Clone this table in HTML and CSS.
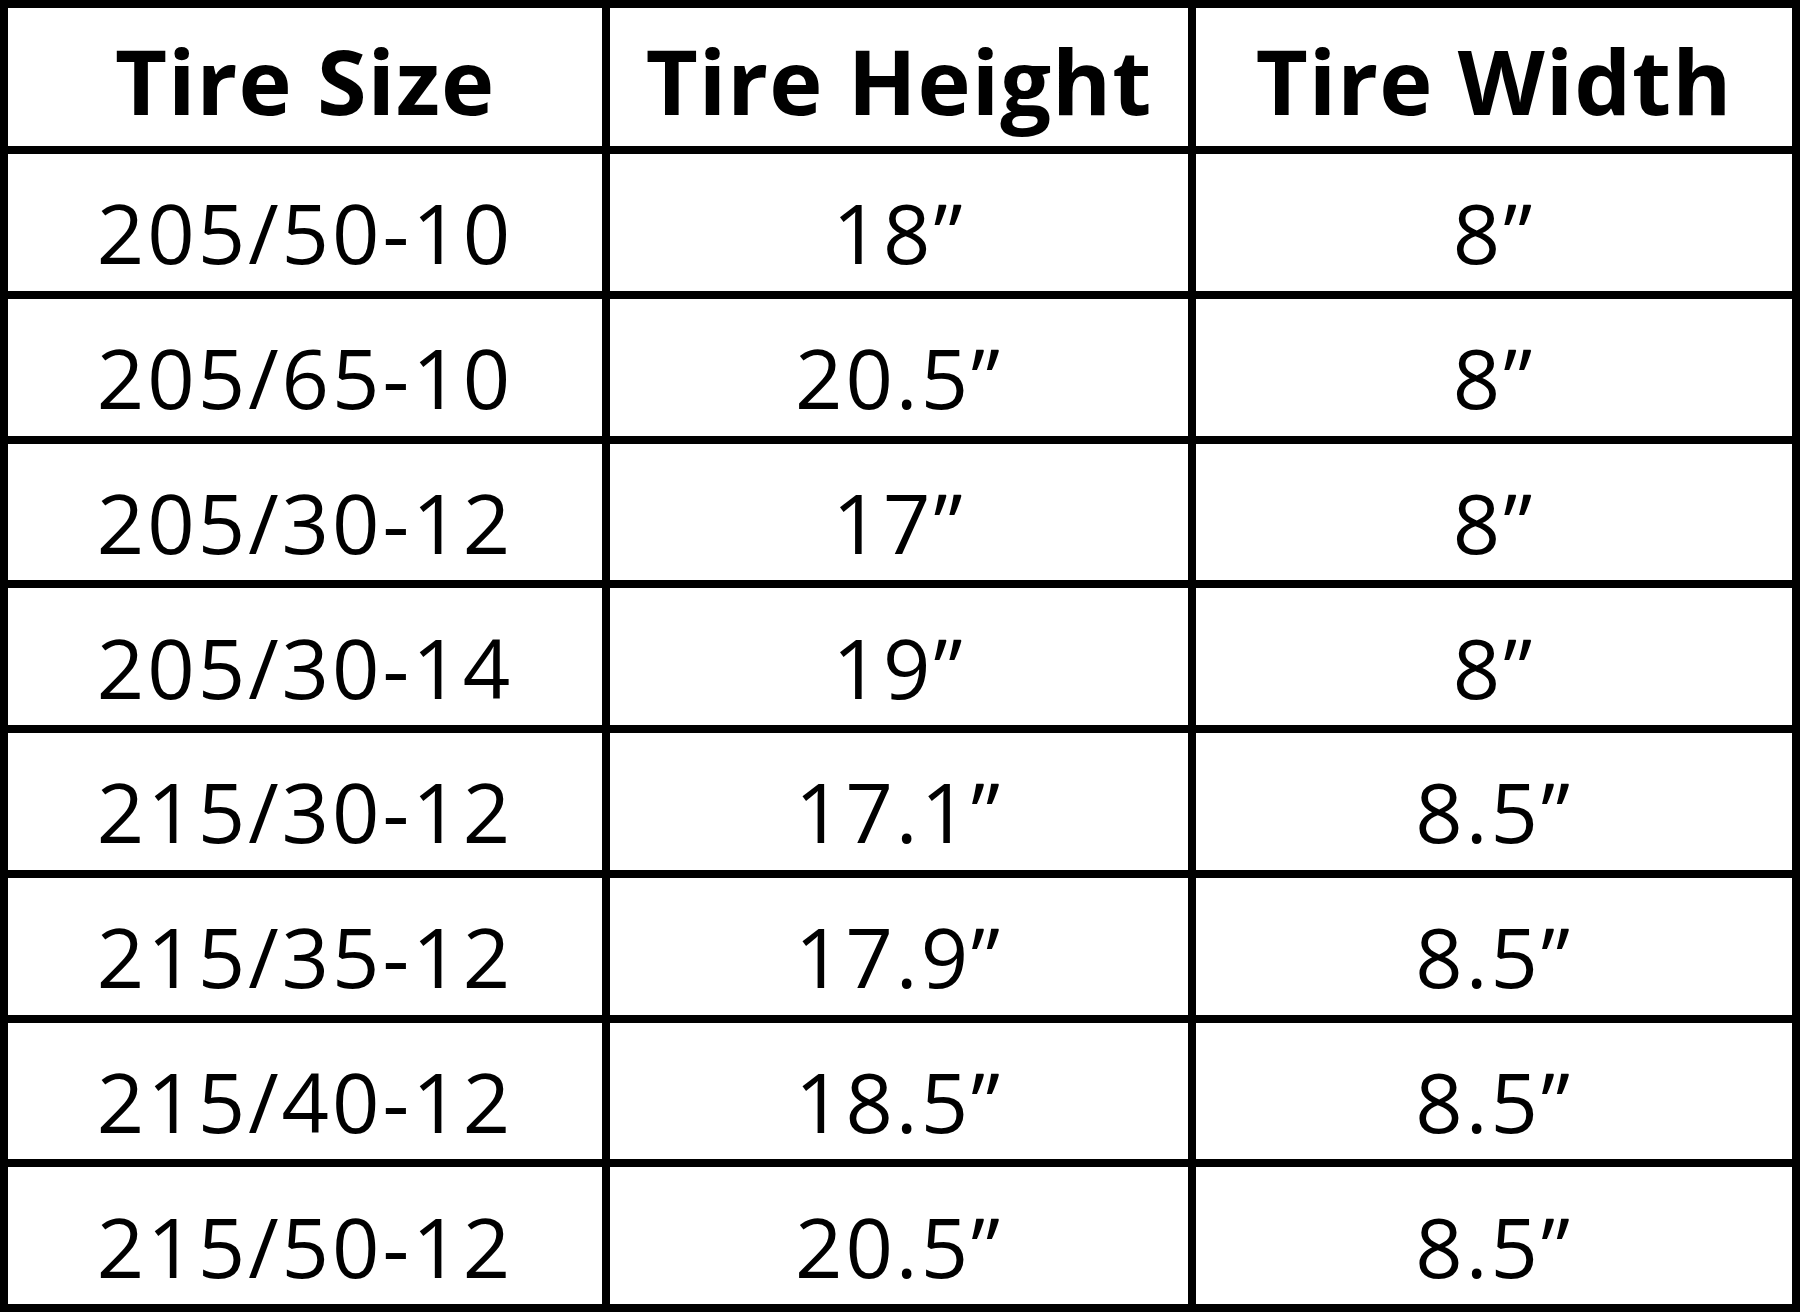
FILE: index.html
```html
<!DOCTYPE html>
<html>
<head>
    <meta charset="UTF-8" />
    <title>Tire sizes</title>
    <link rel="stylesheet" href="styles.css">
</head>
<body>

<div class="sizes">
    <div class="cell head">Tire Size</div>
    <div class="cell head">Tire Height</div>
    <div class="cell head">Tire Width</div>

    <div class="cell">205/50-10</div>
    <div class="cell">18”</div>
    <div class="cell">8”</div>

    <div class="cell">205/65-10</div>
    <div class="cell">20.5”</div>
    <div class="cell">8”</div>

    <div class="cell">205/30-12</div>
    <div class="cell">17”</div>
    <div class="cell">8”</div>

    <div class="cell">205/30-14</div>
    <div class="cell">19”</div>
    <div class="cell">8”</div>

    <div class="cell">215/30-12</div>
    <div class="cell">17.1”</div>
    <div class="cell">8.5”</div>

    <div class="cell">215/35-12</div>
    <div class="cell">17.9”</div>
    <div class="cell">8.5”</div>

    <div class="cell">215/40-12</div>
    <div class="cell">18.5”</div>
    <div class="cell">8.5”</div>

    <div class="cell">215/50-12</div>
    <div class="cell">20.5”</div>
    <div class="cell">8.5”</div>
</div>

</body>
</html>
```

FILE: styles.css
```css
* {
  box-sizing: border-box;
}

body {
  margin: 0;
  background: #fff;
  font-family: "Open Sans", "DejaVu Sans", sans-serif;
  color: #000;
}

/* the table: black background shows through the gaps as the rules */
.sizes {
  display: grid;
  grid-template-columns: 594px 578px 596px;
  grid-template-rows: 138px repeat(8, 1fr);
  gap: 8px;
  padding: 8px;
  width: 1800px;
  height: 1312px;
  background: #000;
}

.cell {
  display: flex;
  align-items: center;
  justify-content: center;
  background: #fff;
  padding-top: 19px;
  font-size: 83px;
  letter-spacing: 3px;
  white-space: nowrap;
}

.head {
  padding-top: 6px;
  font-size: 90px;
  font-weight: bold;
  letter-spacing: 1px;
}
```
